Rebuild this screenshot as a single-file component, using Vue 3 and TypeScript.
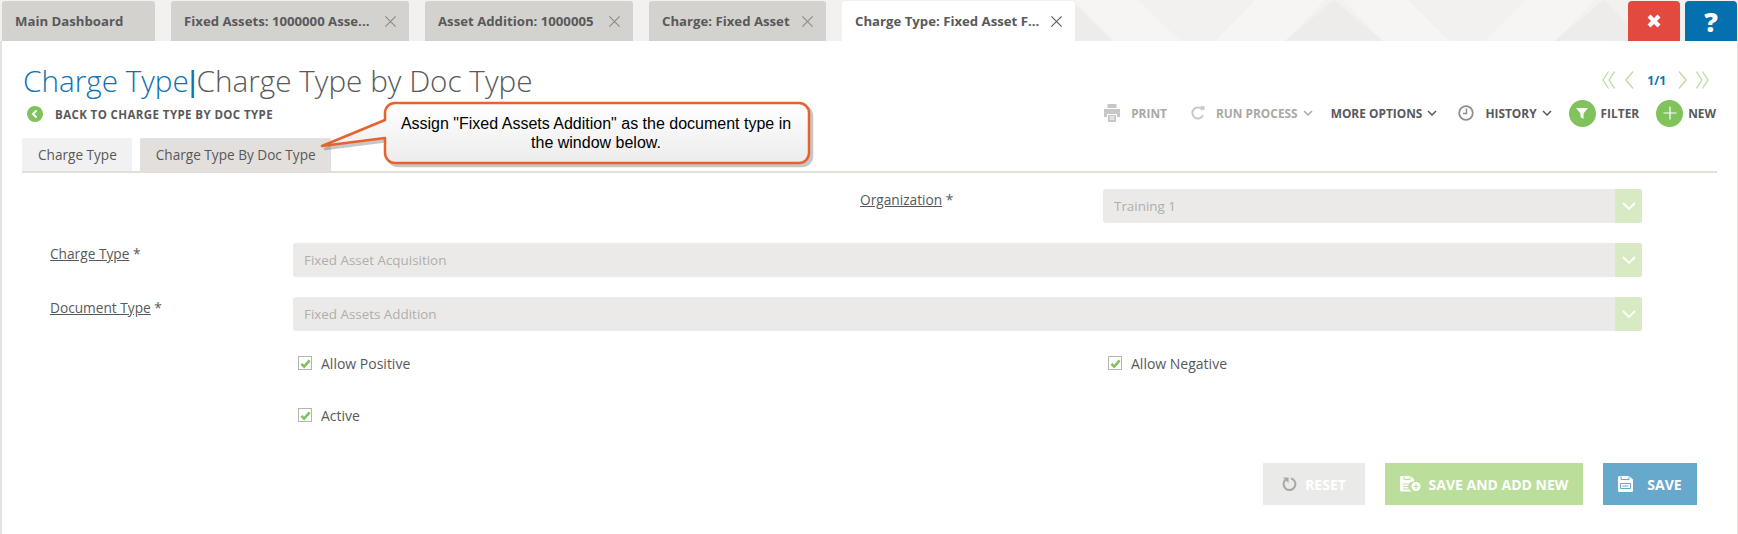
<template>
  <div class="page">
    <div class="tabbar">
      <svg class="tabbar-bg" viewBox="0 0 1738 41" preserveAspectRatio="none" aria-hidden="true">
        <polygon v-for="(tri, i) in triangles" :key="i" :points="tri.points" :fill="tri.fill" />
      </svg>
      <div class="tabs">
        <div
          v-for="tab in tabs"
          :key="tab.label"
          class="tab"
          :class="{ active: tab.active }"
          :style="{ width: tab.width + 'px' }"
        >
          <span class="tab-label">{{ tab.label }}</span>
          <svg v-if="tab.closable" class="tab-close" viewBox="0 0 14 14">
            <path d="M1.5 1.5l11 11M12.5 1.5l-11 11" />
          </svg>
        </div>
      </div>
      <div class="window-btns">
        <button class="win-btn win-close">
          <svg viewBox="0 0 20 20"><path d="M5 5l10 10M15 5L5 15" /></svg>
        </button>
        <button class="win-btn win-help">?</button>
      </div>
    </div>

    <div class="main">
      <header class="head">
        <div class="head-left">
          <h1 class="title"><span class="title-blue">Charge Type</span><span class="title-sep">|</span>Charge Type by Doc Type</h1>
          <a class="back">
            <span class="back-icon">
              <svg viewBox="0 0 10 10"><path d="M6.5 1.5L3 5l3.5 3.5" /></svg>
            </span>
            BACK TO CHARGE TYPE BY DOC TYPE
          </a>
        </div>
        <div class="head-right">
          <div class="pager">
            <svg class="pager-icon double first" viewBox="0 0 13 20"><path d="M6.500 1.500L1 10l5.500 8.500M12.500 1.500L7 10l5.500 8.500" /></svg>
            <svg class="pager-icon prev" viewBox="0 0 9 20"><path d="M8 1.500L1 10l7 8.500" /></svg>
            <span class="pager-count">1/1</span>
            <svg class="pager-icon next" viewBox="0 0 9 20"><path d="M1 1.500L8 10l-7 8.500" /></svg>
            <svg class="pager-icon double last" viewBox="0 0 13 20"><path d="M.5 1.500L6 10 .5 18.500M6.500 1.500L12 10l-5.500 8.500" /></svg>
          </div>
          <div class="actions">
            <span class="action disabled print">
              <svg class="act-icon" viewBox="0 0 16 18">
                <path fill="currentColor" d="M3.5 0h9v4h-9zM0 5h16v8h-3v-3H3v3H0zM4 11h8v7H4z" />
                <path stroke="#fff" stroke-width="1" d="M5.5 13h5M5.5 15h5" />
              </svg>
              PRINT
            </span>
            <span class="action disabled run">
              <svg class="act-icon" viewBox="0 0 14 16">
                <path fill="none" stroke="currentColor" stroke-width="2" d="M11.5 5A5.5 5.5 0 1 0 12 10" />
                <path fill="currentColor" d="M9 1.5l4.5-.5v4.5z" />
              </svg>
              RUN PROCESS
              <svg class="chev" viewBox="0 0 10 6"><path d="M1 1l4 4 4-4" /></svg>
            </span>
            <span class="action more">
              MORE OPTIONS
              <svg class="chev" viewBox="0 0 10 6"><path d="M1 1l4 4 4-4" /></svg>
            </span>
            <span class="action history">
              <svg class="act-icon clock" viewBox="0 0 16 16">
                <circle cx="8" cy="8" r="6.8" fill="none" stroke="currentColor" stroke-width="1.8" />
                <path fill="none" stroke="currentColor" stroke-width="1.5" d="M8.5 3.5v5H5" />
              </svg>
              HISTORY
              <svg class="chev" viewBox="0 0 10 6"><path d="M1 1l4 4 4-4" /></svg>
            </span>
            <span class="action filter">
              <span class="round">
                <svg viewBox="0 0 14 14"><path fill="#fff" d="M1 2h12L8.5 7.5V13l-3-2V7.5z" /></svg>
              </span>
              FILTER
            </span>
            <span class="action new">
              <span class="round">
                <svg viewBox="0 0 14 14"><path stroke="#fff" stroke-width="1.2" d="M7 0.5v13M0.5 7h13" /></svg>
              </span>
              NEW
            </span>
          </div>
        </div>
      </header>

      <nav class="subtabs">
        <span class="subtab">Charge Type</span>
        <span class="subtab current">Charge Type By Doc Type</span>
      </nav>

      <div class="callout">
        <svg class="callout-shape" viewBox="0 0 510 80">
          <defs>
            <linearGradient id="calloutFill" x1="0" y1="0" x2="0" y2="1">
              <stop offset="0" stop-color="#ffffff" />
              <stop offset="1" stop-color="#ececec" />
            </linearGradient>
          </defs>
          <path
            class="callout-path"
            fill="url(#calloutFill)"
            d="M85 8H489a10 10 0 0 1 10 10V58a10 10 0 0 1-10 10H85a10 10 0 0 1-10-10V43L12 51 75 25V18a10 10 0 0 1 10-10z"
          />
        </svg>
        <p class="callout-text">Assign "Fixed Assets Addition" as the document type in<br />the window below.</p>
      </div>

      <form class="form">
        <label class="field-label org-label"><u>Organization</u> *</label>
        <div class="select org-select">
          <span class="select-value">Training 1</span>
          <span class="select-arrow"><svg viewBox="0 0 14 8"><path d="M1 1l6 6 6-6" /></svg></span>
        </div>

        <label class="field-label"><u>Charge Type</u> *</label>
        <div class="select wide">
          <span class="select-value">Fixed Asset Acquisition</span>
          <span class="select-arrow"><svg viewBox="0 0 14 8"><path d="M1 1l6 6 6-6" /></svg></span>
        </div>

        <label class="field-label"><u>Document Type</u> *</label>
        <div class="select wide">
          <span class="select-value">Fixed Assets Addition</span>
          <span class="select-arrow"><svg viewBox="0 0 14 8"><path d="M1 1l6 6 6-6" /></svg></span>
        </div>

        <div class="check-row">
          <span class="check-cell">
            <span class="checkbox"><svg viewBox="0 0 12 12"><path d="M1.5 6.5l3 3 6-7" /></svg></span>
            Allow Positive
          </span>
          <span class="check-cell neg">
            <span class="checkbox"><svg viewBox="0 0 12 12"><path d="M1.5 6.5l3 3 6-7" /></svg></span>
            Allow Negative
          </span>
        </div>
        <div class="check-row active-row">
          <span class="check-cell">
            <span class="checkbox"><svg viewBox="0 0 12 12"><path d="M1.5 6.5l3 3 6-7" /></svg></span>
            Active
          </span>
        </div>
      </form>

      <div class="footer-btns">
        <button class="btn btn-reset">
          <svg class="btn-icon" viewBox="0 0 16 16">
            <path fill="none" stroke="#a9a8a4" stroke-width="2.2" d="M4 3.2A6.3 6.3 0 1 0 9.5 2" />
            <path fill="#a9a8a4" d="M1 1h6v6z" />
          </svg>
          RESET
        </button>
        <button class="btn btn-add">
          <svg class="btn-icon add" viewBox="0 0 21 16">
            <path fill="#fff" d="M0 1.5A1.5 1.5 0 0 1 1.5 0H10l4 3v2.5a5 5 0 0 0-1.500 10H1.500A1.500 1.500 0 0 1 0 14z" />
            <path stroke="#bbdf9b" stroke-width="1" d="M3 8h7M3 10.500h6M3 13h6M4 .5v3h6v-3" fill="none" />
            <circle cx="16" cy="10.500" r="4.500" fill="#fff" />
            <path stroke="#bbdf9b" stroke-width="1.200" d="M16 8v5M13.500 10.500h5" />
          </svg>
          SAVE AND ADD NEW
        </button>
        <button class="btn btn-save">
          <svg class="btn-icon" viewBox="0 0 15 16">
            <path fill="#fff" d="M0 1.500A1.500 1.500 0 0 1 1.500 0H11l4 3.500V14.500A1.500 1.500 0 0 1 13.500 16h-12A1.500 1.500 0 0 1 0 14.500z" />
            <path fill="none" stroke="#67a8cd" stroke-width="1" d="M3 .5v3h8v-3M2.500 7.500h10v5h-10zM4.500 10h6" />
          </svg>
          SAVE
        </button>
      </div>
    </div>
  </div>
</template>

<script setup lang="ts">
interface Tab {
  label: string
  width: number
  closable: boolean
  active?: boolean
}

const tabs: Tab[] = [
  { label: 'Main Dashboard', width: 153, closable: false },
  { label: 'Fixed Assets: 1000000 Asse...', width: 238, closable: true },
  { label: 'Asset Addition: 1000005', width: 208, closable: true },
  { label: 'Charge: Fixed Asset', width: 177, closable: true },
  { label: 'Charge Type: Fixed Asset F...', width: 233, closable: true, active: true }
]

// faint triangles behind the tab strip
const triangles = [
  { points: '1074,4 1113,41 1074,41', fill: '#edecea' },
  { points: '1074,0 1137,0 1181,41 1113,41', fill: '#f6f5f3' },
  { points: '1255,0 1325,0 1285,41 1215,41', fill: '#f6f5f3' },
  { points: '1334,0 1383,41 1285,41', fill: '#edecea' },
  { points: '1343,0 1408,0 1450,41 1383,41', fill: '#f6f5f3' },
  { points: '1526,0 1595,0 1555,41 1486,41', fill: '#f6f5f3' },
  { points: '1604,0 1628,24 1628,41 1555,41', fill: '#edecea' }
]
</script>

<style scoped>
.page {
  width: 1738px;
  height: 534px;
  overflow: hidden;
  background: #fff;
  font-family: "Open Sans", "Noto Sans", sans-serif;
  color: #58595b;
}

.tabbar {
  position: relative;
  display: flex;
  justify-content: space-between;
  height: 41px;
  background: #f2f1ef;
}

.tabbar-bg {
  position: absolute;
  inset: 0;
  width: 100%;
  height: 100%;
}

.tabs {
  position: relative;
  display: flex;
  gap: 16px;
  padding: 1px 0 0 2px;
}

.tab {
  display: flex;
  align-items: center;
  justify-content: space-between;
  box-sizing: border-box;
  height: 40px;
  padding: 0 12px 0 13px;
  background: #d4d2ce;
  border-radius: 3px 3px 0 0;
  font-size: 13.2px;
  font-weight: 700;
  white-space: nowrap;
}

.tab.active {
  background: #fff;
}

.tab-close {
  width: 13px;
  height: 13px;
  flex: none;
  fill: none;
  stroke: #8a8a88;
  stroke-width: 1.2;
}

.tab.active .tab-close {
  stroke: #58595b;
}

.window-btns {
  position: relative;
  display: flex;
  gap: 5px;
  padding: 1px 1px 0 0;
}

.win-btn {
  display: flex;
  align-items: center;
  justify-content: center;
  width: 52px;
  height: 40px;
  padding: 0;
  border: 0;
  border-radius: 4px 4px 0 0;
  color: #fff;
  font-family: "Open Sans", sans-serif;
  font-size: 27px;
  font-weight: 800;
}

.win-close {
  background: #e2493f;
}

.win-close svg {
  width: 20px;
  height: 20px;
  fill: none;
  stroke: #fff;
  stroke-width: 4.2;
}

.win-help {
  background: #0470ae;
}

.main {
  position: relative;
  box-sizing: border-box;
  height: 493px;
  padding: 0 20px;
  border-left: 2px solid #e4e2dd;
  border-right: 1px solid #e4e2dd;
}

.head {
  display: flex;
  justify-content: space-between;
  height: 97px;
}

.head-left {
  padding-top: 20px;
}

.title {
  margin: 0 0 0 1px;
  font-size: 29.7px;
  line-height: 40px;
  font-weight: 300;
  white-space: nowrap;
}

.title-blue,
.title-sep {
  color: #0d72b0;
}

.title-sep {
  font-family: "Liberation Sans", Arial, sans-serif;
  font-weight: 400;
}

.back {
  display: flex;
  align-items: center;
  gap: 12px;
  margin: 4px 0 0 5px;
  font-size: 11.5px;
  letter-spacing: 0.4px;
  font-weight: 700;
}

.back-icon {
  display: flex;
  align-items: center;
  justify-content: center;
  width: 16px;
  height: 16px;
  border-radius: 50%;
  background: #80c25b;
}

.back-icon svg {
  width: 10px;
  height: 10px;
  fill: none;
  stroke: #fff;
  stroke-width: 2;
}

.head-right {
  display: flex;
  flex-direction: column;
  align-items: flex-end;
  padding-top: 29px;
}

.pager {
  display: flex;
  align-items: center;
  height: 20px;
  margin-right: 8px;
}

.pager-icon {
  width: 9px;
  height: 20px;
  fill: none;
  stroke: #b9dd9d;
  stroke-width: 1.3;
}

.pager-icon.double {
  width: 13px;
}

.first {
  margin-right: 10px;
}

.prev {
  margin-right: 13px;
}

.next {
  margin-left: 12px;
}

.last {
  margin-left: 9px;
}

.pager-count {
  color: #0d72b0;
  font-size: 12px;
  font-weight: 700;
}

.actions {
  display: flex;
  align-items: center;
  height: 28px;
  margin: 9px 1px 0 0;
  font-size: 11.9px;
  font-weight: 700;
  white-space: nowrap;
}

.action {
  display: flex;
  align-items: center;
}

.action.disabled {
  color: #a9a8a4;
}

.act-icon {
  width: 16px;
  height: 18px;
  margin-right: 11px;
}

.print .act-icon,
.run .act-icon {
  color: #c8c7c3;
}

.clock {
  color: #8f8e8a;
  height: 16px;
}

.run {
  margin-left: 24px;
}

.run .act-icon {
  width: 14px;
  height: 16px;
}

.chev {
  width: 10px;
  height: 6px;
  margin-left: 5px;
  fill: none;
  stroke: currentColor;
  stroke-width: 1.5;
}

.more {
  margin-left: 18px;
}

.history {
  margin-left: 21px;
}

.filter,
.new {
  margin-left: 17px;
}

.round {
  display: flex;
  align-items: center;
  justify-content: center;
  width: 27px;
  height: 27px;
  margin-right: 5px;
  border-radius: 50%;
  background: #80c25b;
}

.round svg {
  width: 14px;
  height: 14px;
}

.subtabs {
  display: flex;
  gap: 8px;
  height: 33px;
  border-bottom: 2px solid #e2dfda;
}

.subtab {
  display: flex;
  align-items: center;
  padding: 0 15px 0 16px;
  background: #f1f1f1;
  border-radius: 2px 2px 0 0;
  font-size: 13.6px;
}

.subtab.current {
  background: #e2dfdc;
}

.callout {
  position: absolute;
  left: 308px;
  top: 54px;
  width: 510px;
  height: 80px;
}

.callout-shape {
  position: absolute;
  inset: 0;
  width: 510px;
  height: 80px;
  overflow: visible;
  filter: drop-shadow(3px 3px 0 rgba(0, 0, 0, 0.22));
}

.callout-path {
  stroke: #e8622e;
  stroke-width: 2.5;
  stroke-linejoin: round;
}

.callout-text {
  position: absolute;
  left: 74px;
  top: 19px;
  width: 424px;
  margin: 0;
  color: #000;
  font-family: "Liberation Sans", Arial, sans-serif;
  font-size: 16px;
  line-height: 19px;
  text-align: center;
}

.form {
  display: grid;
  grid-template-columns: 243px 567px 243px 539px;
  grid-auto-rows: 34px;
  row-gap: 20px;
  padding: 16px 0 0 28px;
  font-size: 13.7px;
}

.field-label {
  padding-top: 2px;
  line-height: 18px;
}

.org-label {
  grid-column: 3;
}

.select {
  display: flex;
  justify-content: space-between;
  overflow: hidden;
  background: #ebeae8;
  border-radius: 3px;
}

.org-select {
  grid-column: 4;
}

.wide {
  grid-column: 2 / 5;
}

.select-value {
  padding-left: 11px;
  color: #b0aeaa;
  font-size: 13.4px;
  line-height: 34px;
}

.select-arrow {
  display: flex;
  align-items: center;
  justify-content: center;
  width: 27px;
  background: #d7eac4;
}

.select-arrow svg {
  width: 14px;
  height: 8px;
  fill: none;
  stroke: #fff;
  stroke-width: 1.8;
}

.check-row {
  grid-column: 2 / 5;
  display: grid;
  grid-template-columns: 810px 1fr;
  padding-left: 5px;
  font-size: 14px;
}

.active-row {
  margin-top: -2px;
}

.check-cell {
  display: flex;
  align-items: center;
  gap: 9px;
  height: 24px;
}

.checkbox {
  display: flex;
  align-items: center;
  justify-content: center;
  box-sizing: border-box;
  width: 14px;
  height: 14px;
  border: 1px solid #b5b5b3;
}

.checkbox svg {
  width: 11px;
  height: 11px;
  fill: none;
  stroke: #80c25b;
  stroke-width: 2.8;
}

.footer-btns {
  display: flex;
  justify-content: flex-end;
  gap: 20px;
  padding: 0 20px 0 0;
  margin-top: 24px;
}

.btn {
  display: flex;
  align-items: center;
  justify-content: center;
  height: 42px;
  padding: 0;
  border: 0;
  color: #fff;
  font-family: "Open Sans", sans-serif;
  font-size: 14px;
  font-weight: 700;
}

.btn-icon {
  width: 15px;
  height: 16px;
  margin-right: 8px;
}

.btn-icon.add {
  width: 21px;
}

.btn-reset {
  width: 102px;
  background: #eaeae8;
}

.btn-add {
  width: 198px;
  background: #bbdf9b;
}

.btn-save {
  width: 94px;
  background: #67a8cd;
}

.btn-save .btn-icon {
  margin-right: 14px;
}
</style>
